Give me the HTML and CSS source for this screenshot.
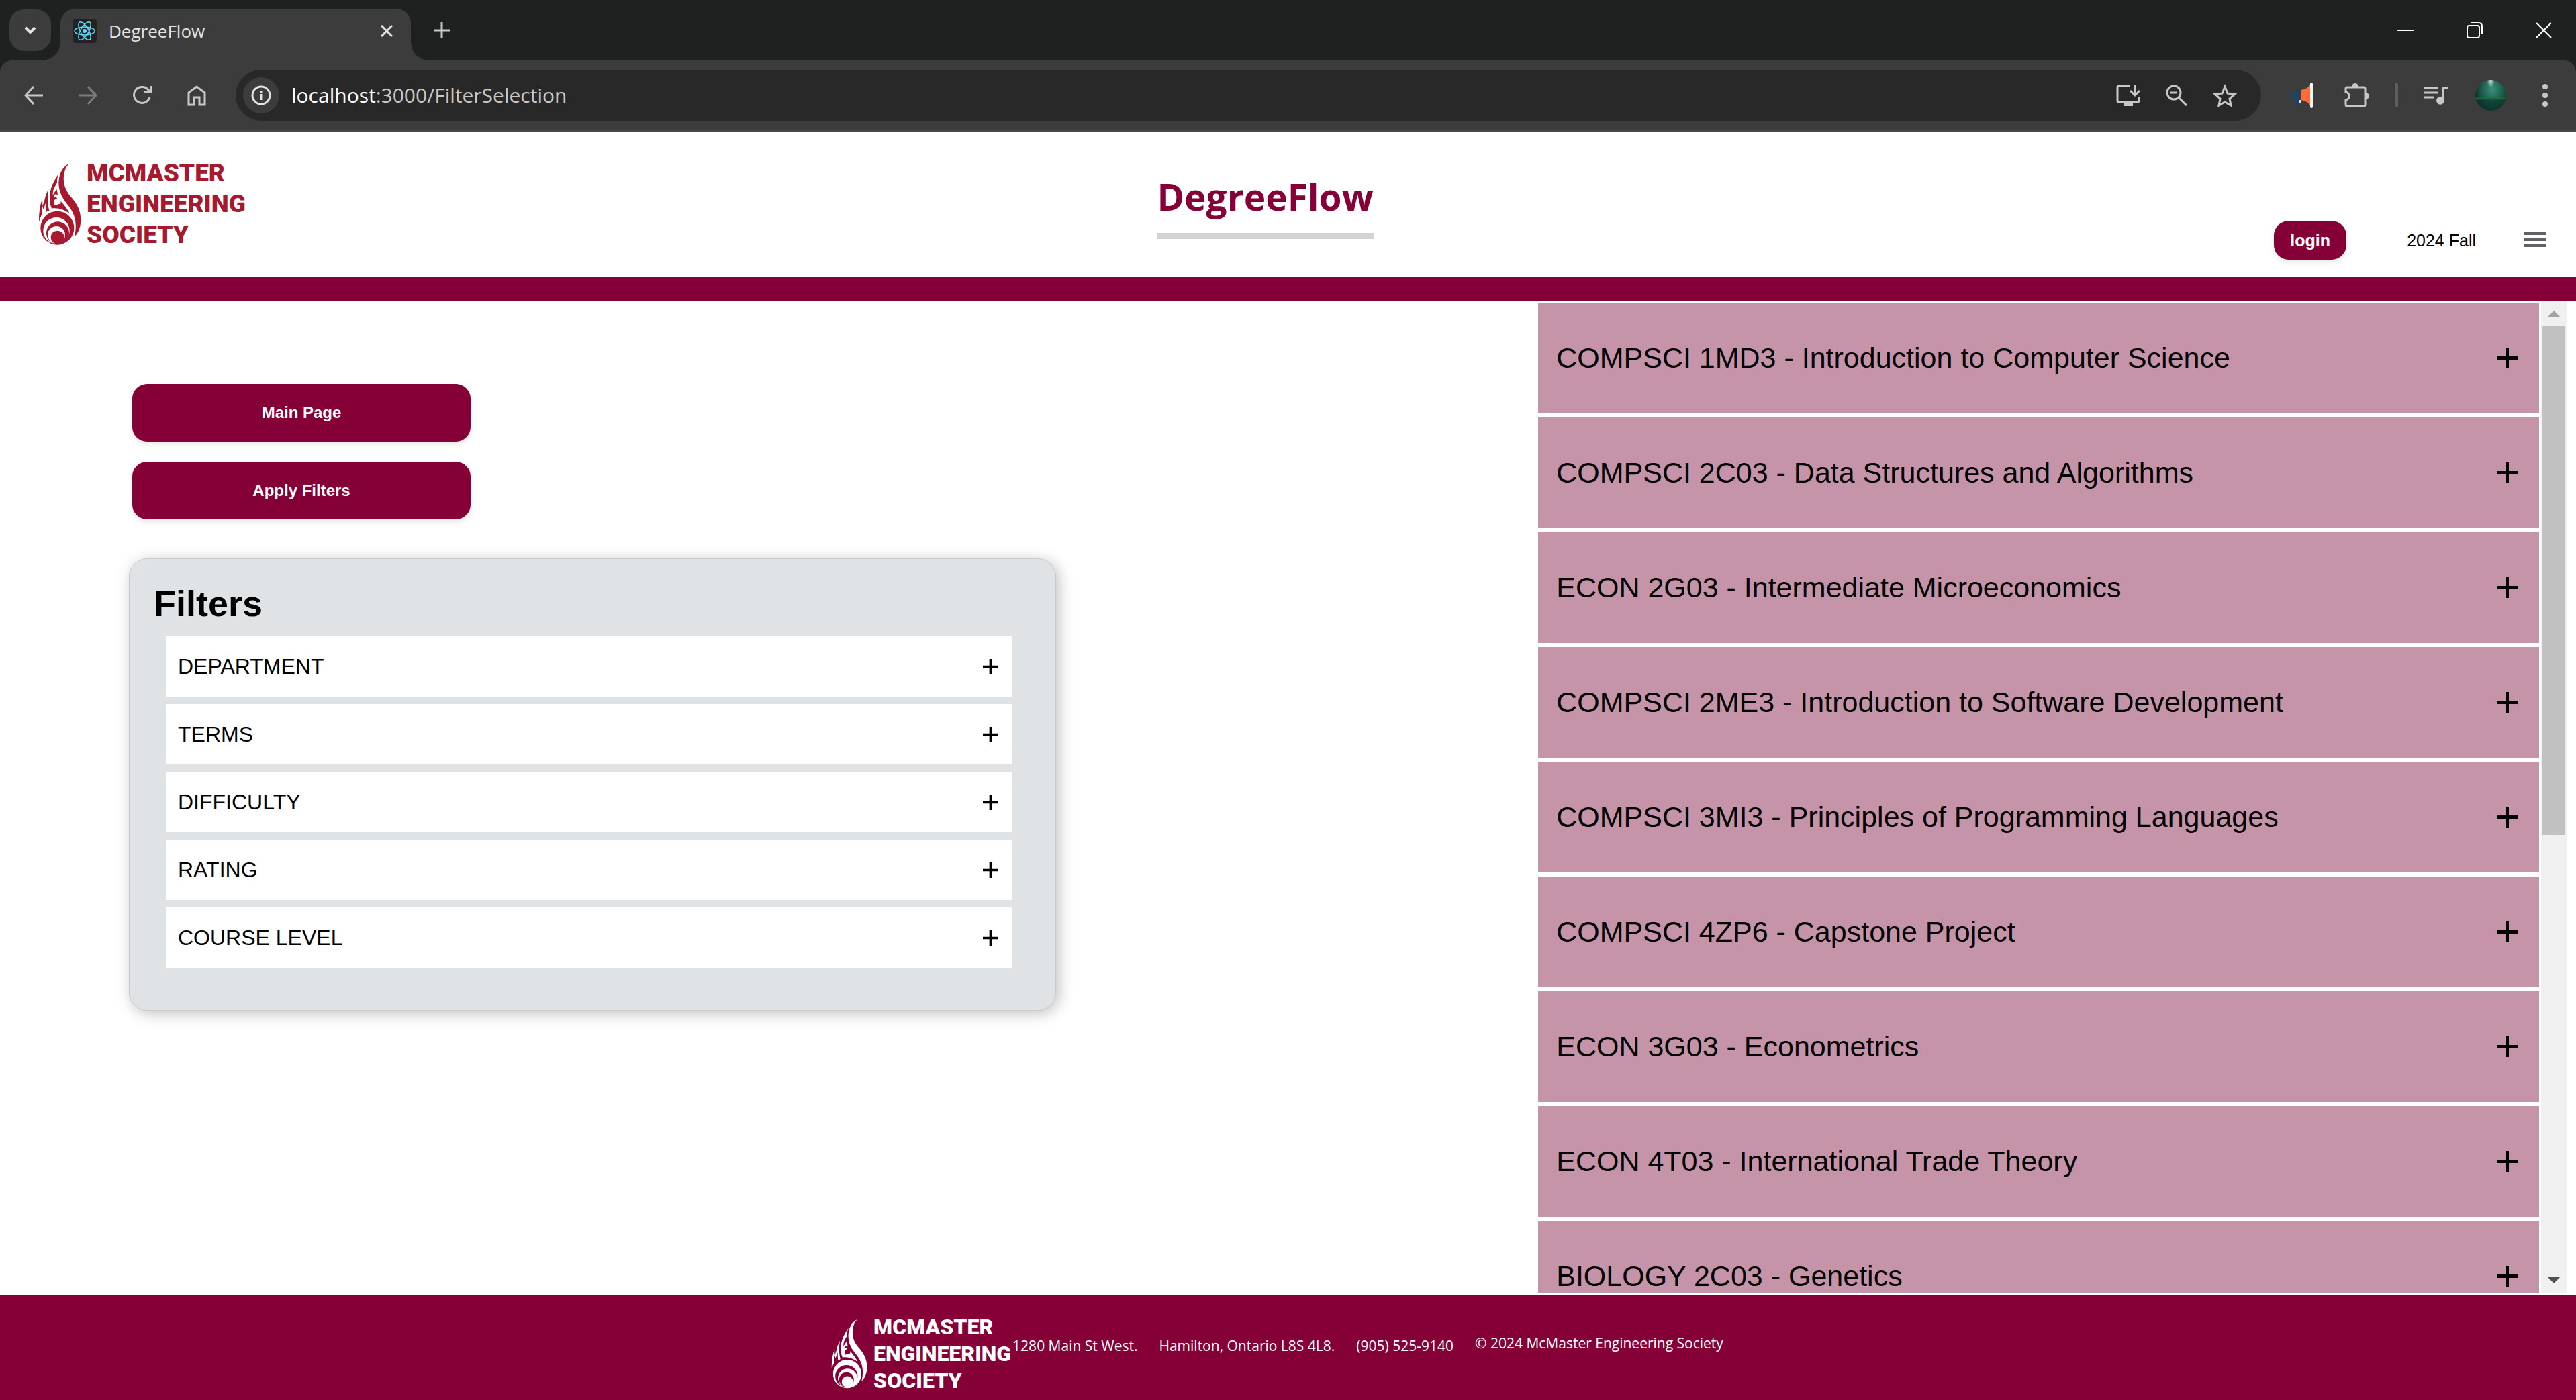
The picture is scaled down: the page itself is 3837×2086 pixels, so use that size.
FILE: index.html
```html
<!DOCTYPE html>
<html lang="en">
<head>
<meta charset="utf-8">
<title>DegreeFlow</title>
<meta name="viewport" content="width=device-width, initial-scale=1">
<link rel="stylesheet" href="styles.css">
</head>
<body>
<svg class="sprite" aria-hidden="true">
  <symbol id="flame" viewBox="170 134 192 366">
    <path fill="currentColor" d="M308 136C276 152 261 185 261 225C262 268 283 298 303 322C336 362 345 408 331 463C350 446 361 416 360 383C358 342 342 316 316 285C288 252 281 222 284 190C287 166 296 148 308 136Z"/>
    <path fill="currentColor" d="M261 181C240 212 221 246 221 288C222 310 224 325 230 337C257 332 289 343 311 361C302 341 287 322 270 304L271 315L243 323L241 300L255 291L246 284L240 289C239 281 242 276 246 273L257 276L253 252C245 260 239 270 235 278C234 262 238 250 244 240L254 222C253 206 257 193 261 181Z"/>
    <path fill="currentColor" d="M173 397C172 358 177 324 188 293L189 326L198 300L203 278L216 249C210 284 211 318 219 346L206 352L204 310L193 341L187 322L187 362C181 373 176 385 173 397Z"/>
    <circle fill="currentColor" cx="255" cy="424" r="75"/>
    <circle class="flame-gap" cx="251" cy="436" r="59"/>
    <circle fill="currentColor" cx="257" cy="447" r="51"/>
    <circle class="flame-gap" cx="251" cy="455" r="39"/>
    <circle fill="currentColor" cx="256" cy="466" r="30"/>
  </symbol>
  <symbol id="plus" viewBox="0 0 31 31"><path fill="currentColor" d="M13 0h5v13h13v5H18v13h-5V18H0v-5h13z"/></symbol>
</svg>

<div class="browser">
  <div class="tabstrip">
    <button class="tab-search" aria-label="Search tabs"><svg width="18" height="12" viewBox="0 0 18 12"><path d="M2 2l7 7 7-7" fill="none" stroke="#e3e3e3" stroke-width="4"/></svg></button>
    <div class="tab">
      <svg class="favicon" viewBox="0 0 36 36"><rect width="36" height="36" rx="5" fill="#222"/><g fill="none" stroke="#61dafb" stroke-width="1.5"><ellipse cx="18" cy="18" rx="15" ry="6"/><ellipse cx="18" cy="18" rx="15" ry="6" transform="rotate(60 18 18)"/><ellipse cx="18" cy="18" rx="15" ry="6" transform="rotate(120 18 18)"/></g><circle cx="18" cy="18" r="3" fill="#61dafb"/></svg>
      <span class="tab-title">DegreeFlow</span>
      <button class="icon-button" aria-label="Close tab"><svg width="18" height="18" viewBox="0 0 18 18"><path d="M1 1l16 16M17 1L1 17" stroke="#e3e3e3" stroke-width="3"/></svg></button>
    </div>
    <button class="icon-button" aria-label="New tab"><svg width="24" height="24" viewBox="0 0 24 24"><path d="M12 0v24M0 12h24" stroke="#c7c7c7" stroke-width="3"/></svg></button>
    <div class="window-controls">
      <button aria-label="Minimize"><svg width="24" height="24" viewBox="0 0 24 24"><path d="M0 12h24" stroke="#fff" stroke-width="2"/></svg></button>
      <button aria-label="Restore"><svg width="24" height="24" viewBox="0 0 24 24"><g fill="none" stroke="#fff" stroke-width="2"><rect x="1" y="5" width="18" height="18" rx="3"/><path d="M6 1h12q5 0 5 5v12"/></g></svg></button>
      <button aria-label="Close"><svg width="24" height="24" viewBox="0 0 24 24"><path d="M1 1l22 22M23 1L1 23" stroke="#fff" stroke-width="2"/></svg></button>
    </div>
  </div>
  <div class="toolbar">
    <button class="icon-button" aria-label="Back"><svg width="28" height="28" viewBox="0 0 28 28"><path d="M14 1L2 14l12 13M2 14h26" fill="none" stroke="#c7c7c7" stroke-width="3"/></svg></button>
    <button class="icon-button" aria-label="Forward"><svg width="28" height="28" viewBox="0 0 28 28"><path d="M14 1l12 13-12 13M26 14H0" fill="none" stroke="#7c7c7c" stroke-width="3"/></svg></button>
    <button class="icon-button" aria-label="Reload"><svg width="28" height="28" viewBox="0 0 28 28"><path d="M25 17A12 12 0 1 1 23 6l3 4" fill="none" stroke="#c7c7c7" stroke-width="3"/><path d="M16 8h9V0h3v11H16z" fill="#c7c7c7"/></svg></button>
    <button class="icon-button" aria-label="Home"><svg width="28" height="32" viewBox="0 0 28 32"><path d="M2 12L14 3l12 9v18h-8V19h-8v11H2z" fill="none" stroke="#c7c7c7" stroke-width="3"/></svg></button>
    <div class="omnibox">
      <button class="site-info" aria-label="Site information"><svg width="30" height="30" viewBox="0 0 30 30"><circle cx="15" cy="15" r="13" fill="none" stroke="#e3e3e3" stroke-width="3"/><path d="M15 13v9M15 8v3" stroke="#e3e3e3" stroke-width="3"/></svg></button>
      <div class="address" role="textbox" aria-label="Address" tabindex="0"><span class="host">localhost</span>:3000/FilterSelection</div>
      <div class="omnibox-actions">
        <button class="icon-button" aria-label="Install app"><svg width="36" height="32" viewBox="0 0 36 32"><path d="M20 2H4q-2 0-2 2v20q0 2 2 2h28q2 0 2-2v-6" fill="none" stroke="#c7c7c7" stroke-width="3"/><path d="M11 26h14v6H11z" fill="#c7c7c7"/><path d="M28 0v15M21 9l7 7 7-7" fill="none" stroke="#c7c7c7" stroke-width="3"/></svg></button>
        <button class="icon-button" aria-label="Zoom"><svg width="32" height="32" viewBox="0 0 32 32"><circle cx="12" cy="12" r="10" fill="none" stroke="#c7c7c7" stroke-width="3"/><path d="M7 12h10M19 19l12 12" stroke="#c7c7c7" stroke-width="3"/></svg></button>
        <button class="icon-button" aria-label="Bookmark"><svg width="36" height="34" viewBox="0 0 36 34"><path d="M18 4l4 10 11 1-8 7 2 10-9-5-9 5 2-10-8-7 11-1z" fill="none" stroke="#c7c7c7" stroke-width="3"/></svg></button>
      </div>
    </div>
    <button class="icon-button" aria-label="Announcements"><svg width="36" height="38" viewBox="0 0 36 38"><path d="M17 11H8q-8 1-8 8t8 8h9z" fill="#26415e"/><path d="M7 26h7l-1 8q-1 3-3 3-2 0-2-3z" fill="#26415e"/><path d="M13 26h4v4h-4z" fill="#d5e3ee"/><circle cx="34" cy="19" r="2" fill="#26415e"/><path d="M16 11Q27 10 31 1v35Q27 27 16 26z" fill="#ff6c37"/><rect x="30" y="0" width="4" height="38" rx="2" fill="#f2f6fa"/></svg></button>
    <button class="icon-button" aria-label="Extensions"><svg width="37" height="38" viewBox="0 0 37 38"><path d="M4 7h25q2 0 2 2v24q0 2-2 2H4q-2 0-2-2v-7q5-1 5-6t-5-6V9q0-2 2-2z" fill="none" stroke="#c7c7c7" stroke-width="3"/><path d="M11 6a5 5 0 0 1 10 0zM32 15a5 5 0 0 1 0 10z" fill="#c7c7c7"/></svg></button>
    <span class="divider"></span>
    <button class="icon-button" aria-label="Media controls"><svg width="36" height="28" viewBox="0 0 36 28"><path d="M0 3h21M0 10h21M0 17h14" stroke="#c7c7c7" stroke-width="3"/><path d="M26 1h10v4h-6v16a6 6 0 1 1-4-5z" fill="#c7c7c7"/></svg></button>
    <button class="icon-button" aria-label="Profile"><span class="avatar"></span></button>
    <button class="icon-button" aria-label="Menu"><svg width="8" height="36" viewBox="0 0 8 36"><g fill="#c7c7c7"><circle cx="4" cy="5" r="4"/><circle cx="4" cy="18" r="4"/><circle cx="4" cy="31" r="4"/></g></svg></button>
  </div>
</div>

<header class="site-header">
  <a class="logo" href="#">
    <svg class="logo-flame"><use href="#flame"/></svg>
    <span class="logo-name">MCMASTER<br>ENGINEERING<br>SOCIETY</span>
  </a>
  <h1 class="site-title">DegreeFlow</h1>
  <div class="account">
    <button class="login">login</button>
    <span class="term">2024 Fall</span>
    <button class="menu" aria-label="Menu"><svg width="33" height="24" viewBox="0 0 33 24"><path d="M0 2h33M0 11h33M0 20h33" stroke="#5f6368" stroke-width="4"/></svg></button>
  </div>
</header>

<main class="content">
  <section class="sidebar">
    <div class="actions">
      <button class="action">Main Page</button>
      <button class="action">Apply Filters</button>
    </div>
    <div class="filters">
      <h2 class="filters-title">Filters</h2>
      <div class="filter-list">
        <button class="filter">DEPARTMENT<svg class="filter-plus"><use href="#plus"/></svg></button>
        <button class="filter">TERMS<svg class="filter-plus"><use href="#plus"/></svg></button>
        <button class="filter">DIFFICULTY<svg class="filter-plus"><use href="#plus"/></svg></button>
        <button class="filter">RATING<svg class="filter-plus"><use href="#plus"/></svg></button>
        <button class="filter">COURSE LEVEL<svg class="filter-plus"><use href="#plus"/></svg></button>
      </div>
    </div>
  </section>
  <section class="courses">
    <div class="course-list">
      <button class="course">COMPSCI 1MD3 - Introduction to Computer Science<svg class="course-plus"><use href="#plus"/></svg></button>
      <button class="course">COMPSCI 2C03 - Data Structures and Algorithms<svg class="course-plus"><use href="#plus"/></svg></button>
      <button class="course">ECON 2G03 - Intermediate Microeconomics<svg class="course-plus"><use href="#plus"/></svg></button>
      <button class="course">COMPSCI 2ME3 - Introduction to Software Development<svg class="course-plus"><use href="#plus"/></svg></button>
      <button class="course">COMPSCI 3MI3 - Principles of Programming Languages<svg class="course-plus"><use href="#plus"/></svg></button>
      <button class="course">COMPSCI 4ZP6 - Capstone Project<svg class="course-plus"><use href="#plus"/></svg></button>
      <button class="course">ECON 3G03 - Econometrics<svg class="course-plus"><use href="#plus"/></svg></button>
      <button class="course">ECON 4T03 - International Trade Theory<svg class="course-plus"><use href="#plus"/></svg></button>
      <button class="course">BIOLOGY 2C03 - Genetics<svg class="course-plus"><use href="#plus"/></svg></button>
    </div>
    <div class="scrollbar">
      <svg class="scroll-arrow" viewBox="0 0 38 38"><path d="M10 24h18l-9-9z" fill="#a3a3a3"/></svg>
      <div class="scroll-track"><div class="scroll-thumb"></div></div>
      <svg class="scroll-arrow" viewBox="0 0 38 38"><path d="M10 14h18l-9 9z" fill="#505050"/></svg>
    </div>
  </section>
</main>

<footer class="site-footer">
  <a class="logo footer-logo" href="#">
    <svg class="logo-flame"><use href="#flame"/></svg>
    <span class="logo-name">MCMASTER<br>ENGINEERING<br>SOCIETY</span>
  </a>
  <address class="contact">
    <span>1280 Main St West.</span>
    <span>Hamilton, Ontario L8S 4L8.</span>
    <span>(905) 525-9140</span>
  </address>
  <p class="copyright">© 2024 McMaster Engineering Society</p>
</footer>
</body>
</html>
```
FILE: styles.css
```css
:root {
  --maroon: #860038;
  --ui-font: "Open Sans", "Noto Sans", sans-serif;
  --body-font: "Liberation Sans", Arial, sans-serif;
}

* { box-sizing: border-box; }

body {
  margin: 0;
  height: 100vh;
  display: flex;
  flex-direction: column;
  background: #fff;
  color: #000;
  font-family: var(--body-font);
}

button {
  border: 0;
  padding: 0;
  background: none;
  color: inherit;
  font: inherit;
  cursor: pointer;
}

svg { display: block; flex: none; }

.sprite { position: absolute; width: 0; height: 0; }

/* Browser frame */
.browser {
  flex: none;
  background: #1f2120;
  font-family: var(--ui-font);
}

.tabstrip {
  display: flex;
  align-items: flex-end;
  height: 90px;
  padding-left: 14px;
}

.tabstrip > .icon-button,
.window-controls button { height: 90px; }

.tab-search {
  display: grid;
  place-items: center;
  width: 62px;
  height: 62px;
  margin: 0 14px 14px 0;
  border-radius: 22px;
  background: #3c3c3c;
}

.tab {
  position: relative;
  display: flex;
  align-items: center;
  gap: 18px;
  width: 522px;
  height: 77px;
  padding: 0 4px 12px 18px;
  border-radius: 22px 22px 0 0;
  background: #3c3c3c;
}

.tab::before,
.tab::after {
  content: "";
  position: absolute;
  bottom: 0;
  width: 26px;
  height: 26px;
}

.tab::before {
  right: 100%;
  background: radial-gradient(circle at 0 0, transparent 25px, #3c3c3c 26px);
}

.tab::after {
  left: 100%;
  background: radial-gradient(circle at 100% 0, transparent 25px, #3c3c3c 26px);
}

.favicon { width: 36px; height: 36px; }

.tab-title {
  flex: 1;
  color: #e3e3e3;
  font-size: 26px;
  line-height: 36px;
}

.icon-button {
  display: grid;
  place-items: center;
  flex: none;
  width: 64px;
  height: 64px;
}

.tabstrip > .icon-button { margin-left: 14px; }

.window-controls {
  display: flex;
  gap: 7px;
  margin-left: auto;
}

.window-controls button {
  display: grid;
  place-items: center;
  width: 96px;
}

.toolbar {
  display: flex;
  align-items: center;
  gap: 17px;
  height: 106px;
  padding: 0 14px 0 18px;
  border-bottom: 3px solid #474747;
  border-radius: 18px 18px 0 0;
  background: #3c3c3c;
}

.omnibox {
  display: flex;
  align-items: center;
  flex: 1;
  height: 76px;
  margin: 0 12px 0 9px;
  padding: 0 22px 0 11px;
  border-radius: 38px;
  background: #282828;
}

.site-info {
  display: grid;
  place-items: center;
  width: 54px;
  height: 54px;
  border-radius: 50%;
  background: #3c3c3c;
}

.address {
  flex: 1;
  padding-left: 18px;
  color: #c7c7c7;
  font-size: 30px;
  line-height: 40px;
}

.host { color: #fff; }

.omnibox-actions { display: flex; gap: 8px; }

.divider {
  width: 5px;
  height: 36px;
  margin: 0 8px;
  border-radius: 2px;
  background: #5e5e5e;
}

.avatar {
  width: 46px;
  height: 46px;
  border-radius: 50%;
  background:
    radial-gradient(ellipse at 50% 0, #d2efe4, transparent 18%),
    linear-gradient(180deg, transparent 56%, #1c6b34 60%, rgba(10, 50, 42, 0.6) 66%),
    radial-gradient(ellipse at 55% 30%, #3a9079, #1c5c4c 45%, #0d2e2a 75%);
}

/* Site header */
.site-header {
  display: flex;
  flex: none;
  justify-content: space-between;
  align-items: center;
  min-height: 252px;
  padding: 0 44px 0 57px;
  border-bottom: 36px solid var(--maroon);
}

.logo {
  display: flex;
  align-items: center;
  gap: 8px;
  width: 325px;
  color: #a6192e;
  text-decoration: none;
}

.logo-flame { width: 64px; height: 122px; }

.flame-gap { fill: var(--gap, #fff); }

.logo-name {
  font-family: Roboto, var(--body-font);
  font-weight: 900;
  font-size: 37px;
  line-height: 46px;
}

.site-title {
  margin: 0;
  padding-bottom: 14px;
  border-bottom: 9px solid #d3d3d3;
  color: var(--maroon);
  font-family: var(--ui-font);
  font-weight: 700;
  font-size: 55px;
  line-height: 80px;
}

.account {
  display: flex;
  align-items: center;
  align-self: flex-end;
  margin-bottom: 25px;
  font-size: 25px;
}

.login {
  width: 108px;
  height: 58px;
  border-radius: 22px;
  background: var(--maroon);
  box-shadow: 0 4px 9px rgba(0, 0, 0, 0.1);
  color: #fff;
  font-weight: 700;
}

.term { margin: 0 72px 0 90px; }

/* Page content */
.content {
  display: flex;
  flex: 1;
  min-height: 0;
  padding: 0 14px 2px 0;
}

.sidebar {
  flex: 1;
  padding: 124px 0 0 192px;
}

.actions {
  display: flex;
  flex-direction: column;
  gap: 30px;
  width: 504px;
  margin: 0 0 58px 5px;
}

.action {
  height: 86px;
  border-radius: 22px;
  background: var(--maroon);
  box-shadow: 0 4px 9px rgba(0, 0, 0, 0.1);
  color: #fff;
  font-weight: 700;
  font-size: 24px;
}

.filters {
  width: 36vw;
  padding: 32px 65px 63px 36px;
  border: 1px solid #c9cbcc;
  border-radius: 27px;
  background: #e0e3e6;
  box-shadow: 4px 4px 22px rgba(0, 0, 0, 0.25);
}

.filters-title {
  margin: 0 0 15px;
  font-size: 54px;
  line-height: 68px;
}

.filter-list {
  display: flex;
  flex-direction: column;
  gap: 11px;
  margin-left: 18px;
}

.filter,
.course {
  display: flex;
  align-items: center;
  justify-content: space-between;
  flex: none;
  text-align: left;
}

.filter {
  height: 90px;
  padding: 0 20px 0 18px;
  background: #fff;
  font-size: 32px;
}

.filter-plus { width: 23px; height: 23px; }

.courses {
  display: flex;
  width: 40vw;
}

.course-list {
  display: flex;
  flex: 1;
  flex-direction: column;
  gap: 6px;
  padding: 3px;
  overflow: hidden;
}

.course {
  height: 165px;
  padding: 0 32px 0 27px;
  background: #c594a9;
  font-size: 43px;
}

.course-plus { width: 31px; height: 31px; }

.scrollbar {
  display: flex;
  flex-direction: column;
  width: 38px;
  background: #f0f0f0;
}

.scroll-arrow { width: 38px; height: 38px; }

.scroll-track { flex: 1; padding: 0 2px; }

.scroll-thumb { height: 54%; background: #c1c1c1; }

/* Footer */
.site-footer {
  display: flex;
  flex: none;
  align-items: flex-start;
  justify-content: center;
  min-height: 157px;
  padding: 28px 32px 0 0;
  background: var(--maroon);
  color: #fff;
  font-family: var(--ui-font);
  font-size: 21px;
  line-height: 30px;
}

.footer-logo {
  --gap: var(--maroon);
  gap: 9px;
  width: 270px;
  color: #fff;
}

.footer-logo .logo-flame { width: 54px; height: 108px; }

.footer-logo .logo-name { font-size: 32px; line-height: 40px; }

.contact {
  display: flex;
  gap: 32px;
  margin-top: 33px;
  font-style: normal;
}

.copyright { margin: 29px 0 0 32px; }
```
